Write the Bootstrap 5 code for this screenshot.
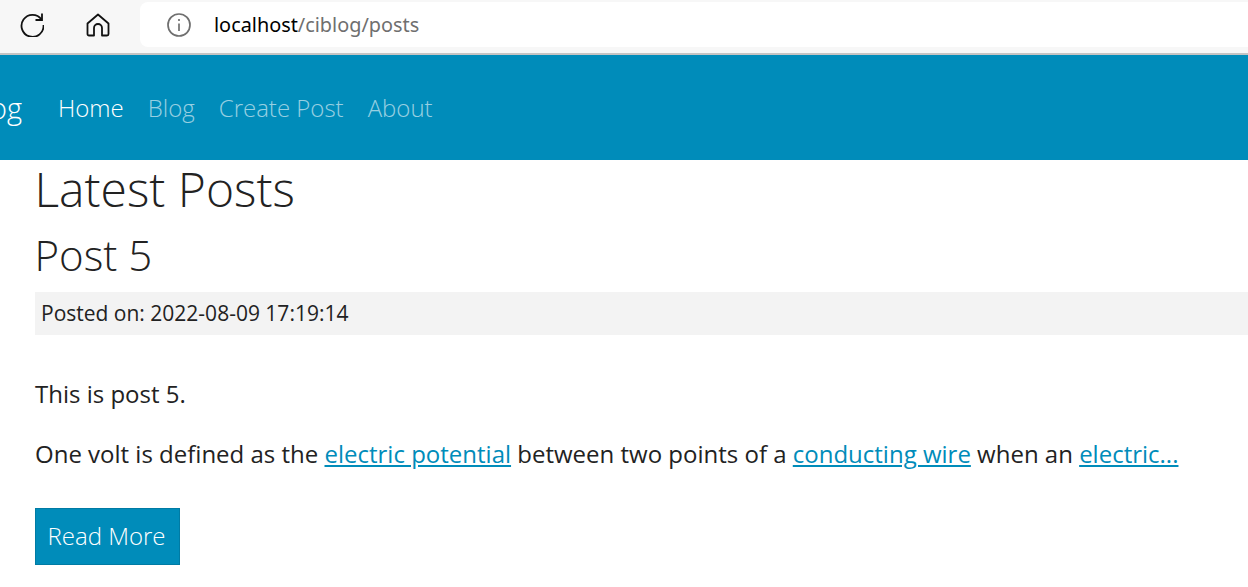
<!DOCTYPE html>
<html lang="en">
<head>
  <meta charset="UTF-8" />
  <title>ciBlog</title>
  <link href="https://cdn.jsdelivr.net/npm/bootstrap@5.3.0/dist/css/bootstrap.min.css" rel="stylesheet"/>
  <style>
    html, body { height: 587px; overflow: hidden; }
    body {
      font-family: "Open Sans", "Noto Sans", sans-serif;
      font-size: 24px;
      color: #222;
      background: #fff;
    }
    .chrome-bar { height: 55px; background: #f7f7f7; border-bottom: 2px solid #c4c4c4; }
    .chrome-btn { width: 24px; height: 24px; margin-top: 13px; }
    .chrome-reload { margin-left: 20px; }
    .chrome-home { margin-left: 42px; }
    .url-box {
      margin: 2px 0 0 30px; height: 45px; background: #fff;
      border-radius: 8px 0 0 8px; padding-left: 27px;
      font-family: "Noto Sans", sans-serif; font-size: 19.85px; line-height: 45px; color: #000;
    }
    .url-box svg { width: 24px; height: 24px; margin-right: 23px; }
    .url-path { color: #6f6f6f; }
    .site-nav { height: 105px; background: #008cba; overflow: hidden; padding: 0; flex-wrap: nowrap; justify-content: flex-start; }
    .site-nav .navbar-brand { margin: 0 0 0 -55px; padding: 0; font-size: 29px; font-weight: 300; color: #fff; width: 77px; }
    .site-nav .navbar-nav { margin-left: 36px; gap: 24px; flex-direction: row; }
    .site-nav .nav-link { padding: 0; font-size: 24px; font-weight: 300; color: rgba(255,255,255,.6); }
    .site-nav .nav-link.active { color: #fff; }
    .page-body { padding-left: 35px; }
    .page-title { font-size: 48px; font-weight: 300; line-height: 58px; margin: 0 0 11px -0.5px; color: #222; }
    .post-title { font-size: 42px; font-weight: 300; line-height: 52px; margin: 0 0 11px -0.5px; color: #222; }
    .post-date { background: #f3f3f3; height: 43px; line-height: 43px; padding-left: 6px; font-size: 21px; }
    .post-text { line-height: 30px; }
    .post-intro { margin: 44px 0 30px; }
    .post-body { margin: 0 0 39px; }
    .post-text a { color: #008cba; }
    .read-btn {
      background: #008cba; border: 1px solid #007ba4; border-radius: 0; color: #fff;
      font-size: 24px; font-weight: 300; padding: 0 2px 2px 0; height: 57px; line-height: 53px; width: 145px;
    }
  </style>
</head>
<body>

  <!-- browser toolbar -->
  <div class="chrome-bar d-flex">
    <svg class="chrome-btn chrome-reload" viewBox="0 0 24 24" fill="none" stroke="#111" stroke-width="1.8">
      <path d="M21.5 6.5 A11 11 0 1 0 23.5 12"/>
      <path d="M22 0.5 V7 H15.5"/>
    </svg>
    <svg class="chrome-btn chrome-home" viewBox="0 0 24 24" fill="none" stroke="#111" stroke-width="1.8" stroke-linejoin="round">
      <path d="M1.5 10.5 L12 1.5 L22.5 10.5 V21 a1.5 1.5 0 0 1 -1.5 1.5 H16 V15 a4 4 0 0 0 -8 0 V22.5 H3 a1.5 1.5 0 0 1 -1.5 -1.5 Z"/>
    </svg>
    <div class="url-box flex-grow-1 d-flex align-items-center">
      <svg viewBox="0 0 24 24" fill="none" stroke="#6f6f6f" stroke-width="1.7">
        <circle cx="12" cy="12" r="11"/>
        <path d="M12 10.5 V18"/>
        <path d="M12 6 V8"/>
      </svg>
      <span>localhost<span class="url-path">/ciblog/posts</span></span>
    </div>
  </div>

  <!-- Navbar -->
  <nav class="navbar site-nav">
    <a class="navbar-brand" href="#">ciBlog</a>
    <ul class="navbar-nav">
      <li class="nav-item"><a class="nav-link active" href="#">Home</a></li>
      <li class="nav-item"><a class="nav-link" href="#">Blog</a></li>
      <li class="nav-item"><a class="nav-link" href="#">Create Post</a></li>
      <li class="nav-item"><a class="nav-link" href="#">About</a></li>
    </ul>
  </nav>

  <!-- Page Content -->
  <div class="page-body">
    <h1 class="page-title">Latest Posts</h1>
    <h2 class="post-title">Post 5</h2>
    <div class="post-date">Posted on: 2022-08-09 17:19:14</div>
    <p class="post-text post-intro">This is post 5.</p>
    <p class="post-text post-body">One volt is defined as the <a href="#">electric potential</a> between two points of a <a href="#">conducting wire</a> when an <a href="#">electric...</a></p>
    <a class="btn read-btn" href="#">Read More</a>
  </div>

  <script src="https://cdn.jsdelivr.net/npm/bootstrap@5.3.0/dist/js/bootstrap.bundle.min.js"></script>
</body>
</html>
